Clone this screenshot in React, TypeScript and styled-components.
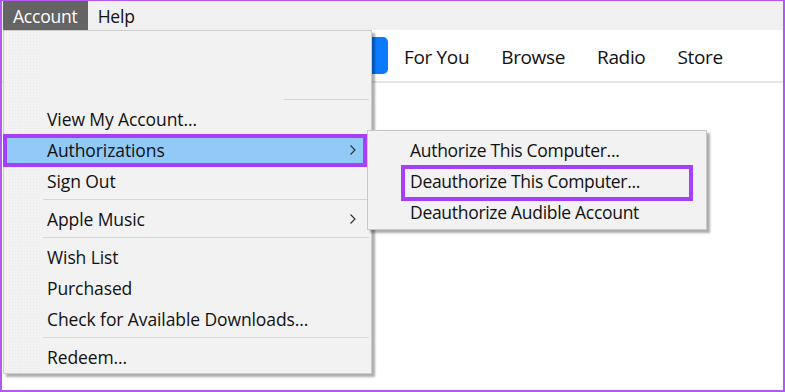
import React from "react"
import styled, { createGlobalStyle } from "styled-components"

const GlobalStyle = createGlobalStyle`
  html, body {
    margin: 0;
    padding: 0;
    background: #ffffff;
  }
  body {
    font-family: "Open Sans", "Noto Sans", "Liberation Sans", sans-serif;
    color: #111;
  }
`

const Frame = styled.div`
  position: relative;
  width: 785px;
  height: 392px;
  box-sizing: border-box;
  border: 2px solid #b259f1;
  border-top-width: 1px;
  background: #ffffff;
  overflow: hidden;
`

const MenuBar = styled.div`
  display: flex;
  align-items: stretch;
  height: 29px;
  padding-left: 1px;
  background: #f0f0f0;
`

const MenuTitle = styled.div<{ $open?: boolean }>`
  display: flex;
  align-items: center;
  padding: 0 10px 0 10px;
  font-size: 17.5px;
  letter-spacing: -0.2px;
  background: ${p => (p.$open ? "#646464" : "transparent")};
  color: ${p => (p.$open ? "#ffffff" : "#111111")};
`

const NavBar = styled.div`
  display: flex;
  align-items: center;
  height: 51px;
  padding-left: 326px;
  gap: 32px;
  border-bottom: 2px solid #e6e6e6;
  background: #ffffff;
`

const LibraryButton = styled.div`
  width: 60px;
  height: 37px;
  margin-right: -16px;
  border-radius: 5px;
  background: #0a7bff;
`

const NavItem = styled.div`
  margin-top: 3px;
  font-size: 19px;
  letter-spacing: -0.35px;
  color: #111;
`

const Dropdown = styled.div`
  position: absolute;
  left: 1px;
  top: 29px;
  width: 367px;
  box-sizing: content-box;
  border: 1px solid #cdcdcd;
  background: #f2f2f2;
  box-shadow: 3px 3px 2px rgba(0, 0, 0, 0.32);
  padding-bottom: 1px;
`

const Gutter = styled.div`
  position: absolute;
  left: 4px;
  top: 0;
  bottom: 0;
  width: 32px;
  background-image: radial-gradient(#e7e7e7 0.6px, transparent 0.8px);
  background-size: 3px 3px;
`

const Blank = styled.div`
  height: 65px;
`

const Separator = styled.div<{ $from?: number }>`
  height: 7px;
  display: flex;
  align-items: center;
  padding-left: ${p => p.$from ?? 39}px;
  padding-right: 2px;
  &::before {
    content: "";
    flex: 1;
    height: 1px;
    background: #d6d6d6;
  }
`

const Row = styled.div<{ $active?: boolean; $indent?: number; $tight?: boolean }>`
  position: relative;
  display: flex;
  align-items: center;
  height: 31px;
  padding-left: ${p => p.$indent ?? 43}px;
  padding-right: 14px;
  font-size: 17.5px;
  letter-spacing: ${p => (p.$tight ? "-0.3px" : "-0.1px")};
  color: #111;
  background: ${p => (p.$active ? "#91c9f7" : "transparent")};
`

const Label = styled.span`
  flex: 1;
  white-space: nowrap;
`

const Callout = styled.div<{ $top: number; $right: number; $bottom: number; $left: number }>`
  position: absolute;
  top: ${p => p.$top}px;
  right: ${p => p.$right}px;
  bottom: ${p => p.$bottom}px;
  left: ${p => p.$left}px;
  border: 4.5px solid #a73ff8;
  pointer-events: none;
  z-index: 3;
`

const Submenu = styled.div`
  position: absolute;
  left: 363px;
  top: -4px;
  width: 338px;
  padding: 3px 0 2px 0;
  border: 1px solid #c8c8c8;
  background: #f2f2f2;
  box-shadow: 3px 3px 2px rgba(0, 0, 0, 0.32);
  z-index: 2;
  letter-spacing: -0.3px;
`

function Chevron() {
  return (
    <svg width="8" height="12" viewBox="0 0 8 12">
      <path d="M1.5 1.5 L6 6 L1.5 10.5" fill="none" stroke="#333" strokeWidth="1.2" />
    </svg>
  )
}

type MenuEntry = { label: string; sub?: boolean } | "sep"

const lower: MenuEntry[] = [
  "sep",
  { label: "Apple Music", sub: true },
  "sep",
  { label: "Wish List" },
  { label: "Purchased" },
  { label: "Check for Available Downloads..." },
  "sep",
  { label: "Redeem..." },
]

function AuthSubmenu() {
  return (
    <Submenu>
      <Row $tight $indent={42}><Label>Authorize This Computer...</Label></Row>
      <Row $tight $indent={42}>
        <Label>Deauthorize This Computer...</Label>
        <Callout $top={0} $right={13} $bottom={-5} $left={33} />
      </Row>
      <Row $tight $indent={42}><Label>Deauthorize Audible Account</Label></Row>
    </Submenu>
  )
}

function AccountMenu() {
  return (
    <Dropdown>
      <Gutter />
      <Blank />
      <Separator $from={280} />
      <Row><Label>View My Account...</Label></Row>
      <Row $active>
        <Label>Authorizations</Label>
        <Chevron />
        <Callout $top={0} $right={4} $bottom={-2} $left={-1} />
        <AuthSubmenu />
      </Row>
      <Row><Label>Sign Out</Label></Row>
      {lower.map((e, i) =>
        e === "sep" ? (
          <Separator key={i} />
        ) : (
          <Row key={i}>
            <Label>{e.label}</Label>
            {e.sub ? <Chevron /> : null}
          </Row>
        )
      )}
    </Dropdown>
  )
}

export default function App() {
  return (
    <>
      <GlobalStyle />
      <Frame>
        <MenuBar>
          <MenuTitle $open>Account</MenuTitle>
          <MenuTitle>Help</MenuTitle>
        </MenuBar>
        <NavBar>
          <LibraryButton />
          <NavItem>For You</NavItem>
          <NavItem>Browse</NavItem>
          <NavItem>Radio</NavItem>
          <NavItem>Store</NavItem>
        </NavBar>
        <AccountMenu />
      </Frame>
    </>
  )
}
